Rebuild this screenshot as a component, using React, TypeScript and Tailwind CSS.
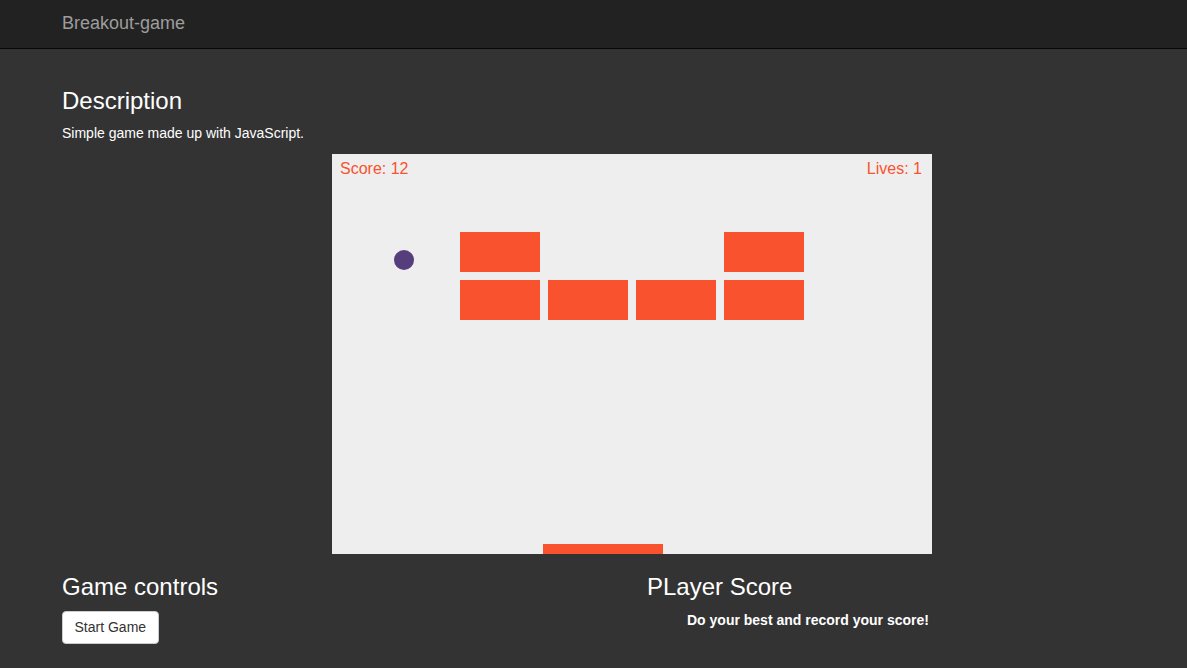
import React from "react";

const bricks = [
  { x: 128, y: 78 },
  { x: 392, y: 78 },
  { x: 128, y: 126 },
  { x: 216, y: 126 },
  { x: 304, y: 126 },
  { x: 392, y: 126 },
];

function GameField() {
  return (
    <svg width="600" height="400" className="mx-auto block bg-[#eeeeee]">
      <text x="8" y="20" fill="#f9522e" fontSize="16" fontFamily="Liberation Sans, Arial, sans-serif">
        Score: 12
      </text>
      <text x="590" y="20" textAnchor="end" fill="#f9522e" fontSize="16" fontFamily="Liberation Sans, Arial, sans-serif">
        Lives: 1
      </text>
      {bricks.map((b, i) => (
        <rect key={i} x={b.x} y={b.y} width="80" height="40" fill="#f9522e" />
      ))}
      <circle cx="72" cy="106" r="10" fill="#563d7c" />
      <rect x="211" y="390" width="120" height="10" fill="#f9522e" />
    </svg>
  );
}

export default function App() {
  return (
    <div className="min-h-[668px] w-full overflow-hidden bg-[#333333] font-['Liberation_Sans',Arial,sans-serif] text-white">
      {/* navbar */}
      <header className="h-[49px] border-b border-[#080808] bg-[#222222]">
        <div className="pl-[62px] text-[18px] leading-[46px] text-[#9d9d9d]">Breakout-game</div>
      </header>

      <main className="w-[1202px] pl-[62px] pt-[39px]">
        <div className="w-[1140px]">
          <h3 className="mb-[9px] text-[24px] leading-[26px]">Description</h3>
          <p className="mb-[11px] text-[14px] leading-5">Simple game made up with JavaScript.</p>

          <GameField />

          <div className="mt-[20px] flex">
            <div className="w-[585px]">
              <h3 className="mb-[11px] text-[24px] leading-[26px]">Game controls</h3>
              <button className="h-[33px] rounded-[4px] border border-[#cccccc] bg-white px-[11.5px] text-[14px] text-[#333333]">
                Start Game
              </button>
            </div>
            <div className="w-[555px]">
              <h3 className="mb-[10px] text-[24px] leading-[26px]">PLayer Score</h3>
              <p className="pl-10 text-[14px] font-bold leading-5">Do your best and record your score!</p>
            </div>
          </div>
        </div>
      </main>
    </div>
  );
}
